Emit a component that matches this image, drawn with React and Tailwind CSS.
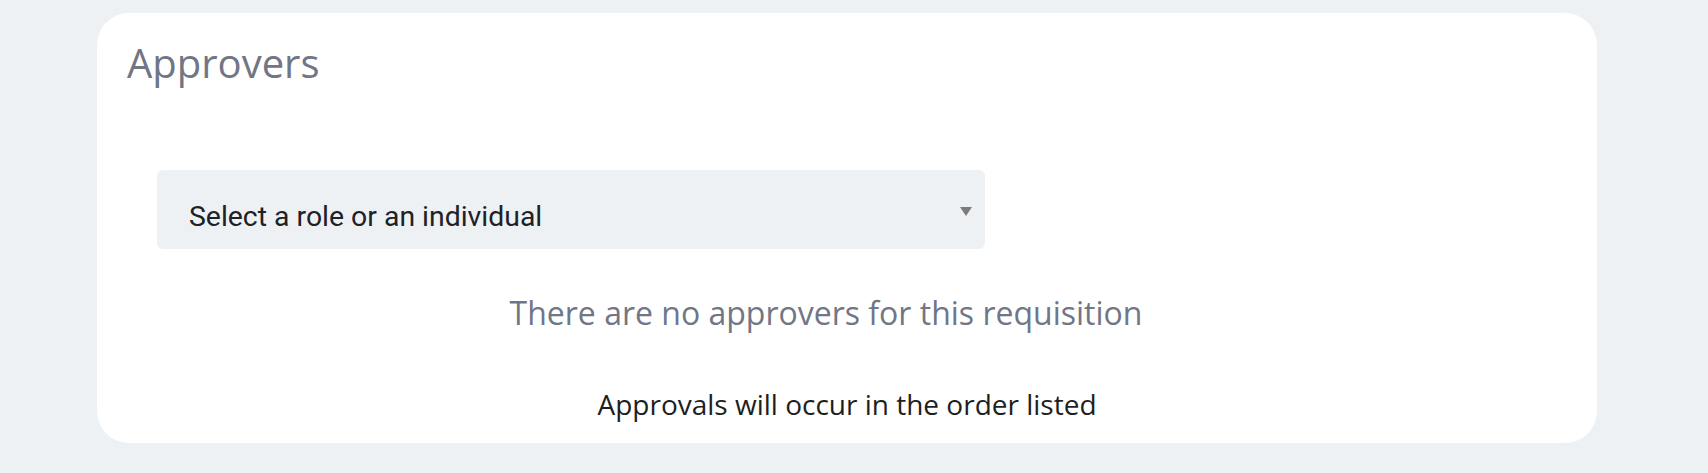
export default function App() {
  return (
    <div className="min-h-[473px] w-full bg-[#eef1f4] pt-[13px] pb-[30px]">
      <section className="ml-[97px] w-[1500px] h-[430px] rounded-[32px] bg-white flex flex-col font-['Open_Sans',sans-serif]">
        {/* Header */}
        <h2 className="pl-[30px] pt-[26px] text-[40px] leading-[48px] font-normal text-[#717686]">
          Approvers
        </h2>

        {/* Role / individual picker */}
        <div className="ml-[60px] mt-[83px] w-[828px] h-[79px] rounded-md bg-[#eef1f4] flex items-center justify-between pl-[32px] pr-[13px]">
          <span className="pt-[15px] font-['Roboto',sans-serif] text-[28.4px] leading-[34px] text-[#202124]">
            Select a role or an individual
          </span>
          <svg width="12" height="9" viewBox="0 0 12 9" className="mt-[3px]">
            <polygon points="0,0 12,0 6,9" fill="#7b7b7b" />
          </svg>
        </div>

        {/* Empty state */}
        <p className="mt-[42px] pr-[42px] text-center text-[32px] leading-[44px] text-[#717686]">
          There are no approvers for this requisition
        </p>

        <p className="mt-[49px] text-center text-[28px] leading-[40px] text-[#1e1e1e]">
          Approvals will occur in the order listed
        </p>
      </section>
    </div>
  );
}
